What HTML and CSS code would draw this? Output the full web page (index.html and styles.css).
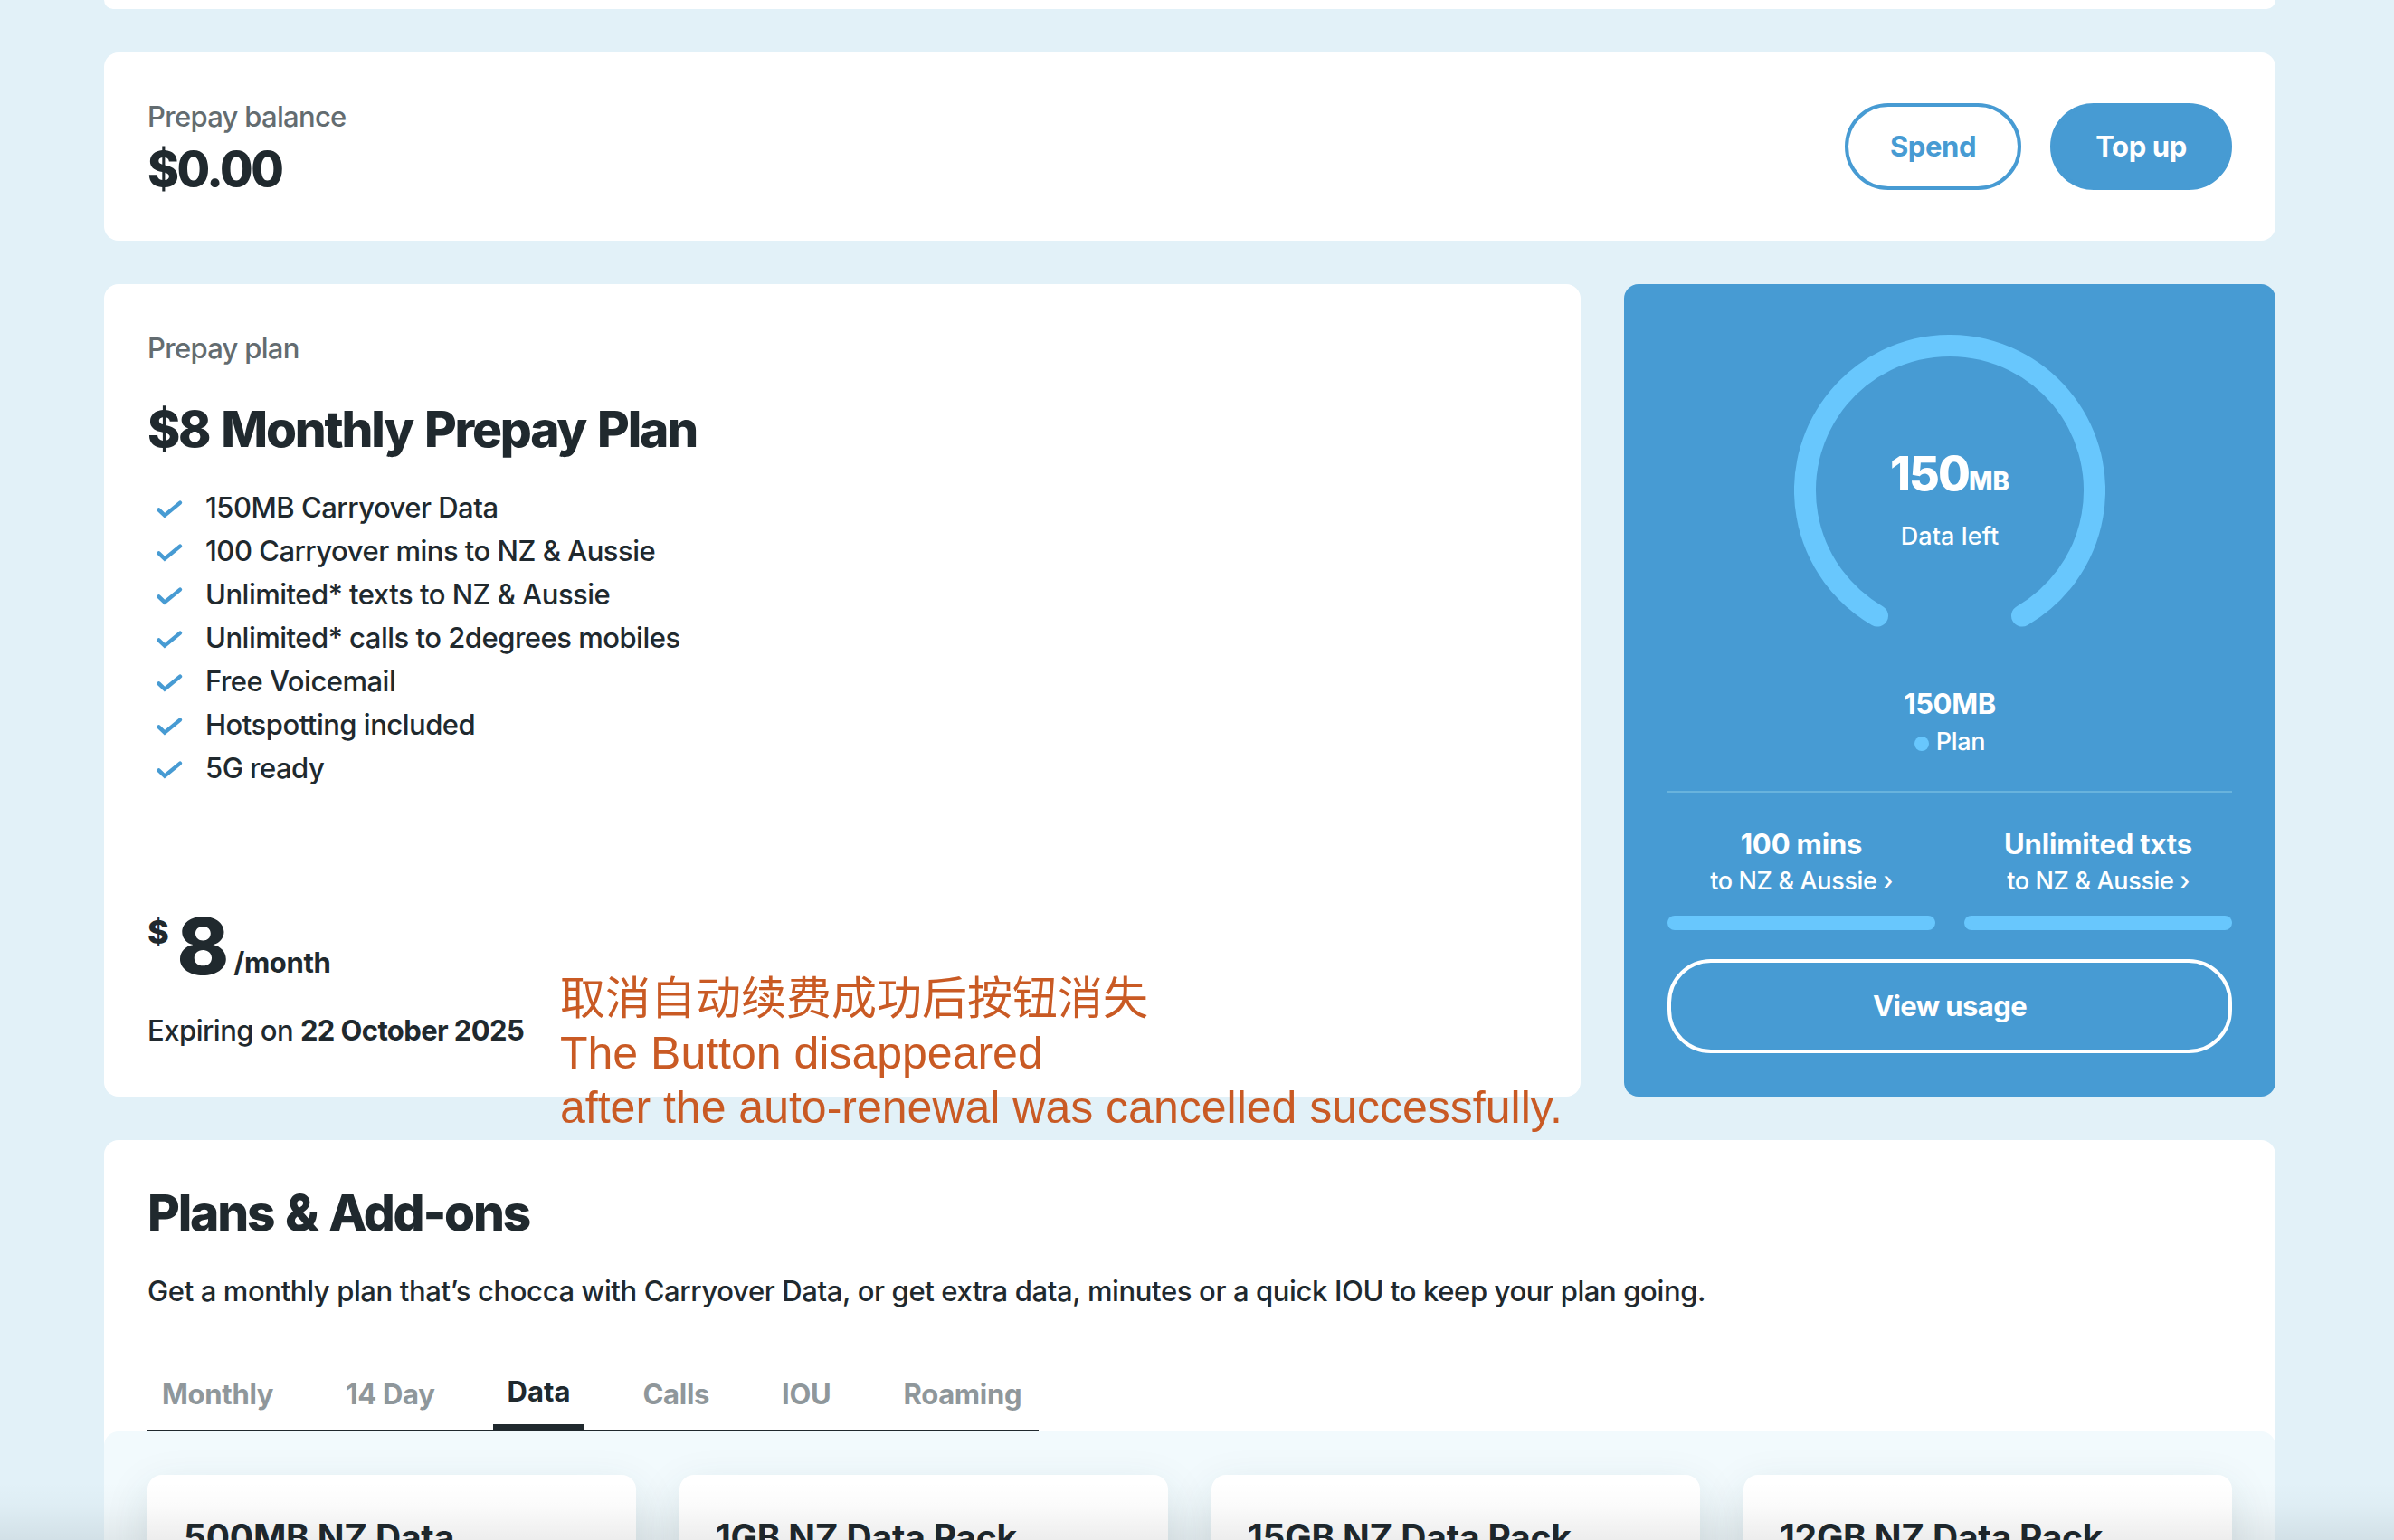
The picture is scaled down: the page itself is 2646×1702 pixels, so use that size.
FILE: index.html
```html
<!DOCTYPE html>
<html lang="en">
<head>
    <meta charset="UTF-8">
    <meta name="viewport" content="width=device-width, initial-scale=1.0">
    <title>Prepay</title>
    <link rel="stylesheet" href="styles.css">
</head>
<body>
    <svg class="symbols" aria-hidden="true">
        <symbol id="check" viewBox="0 0 32 23">
            <path d="M4.5 13.4 L11 19.6 L28 5.6" fill="none" stroke="currentColor" stroke-width="4.4" stroke-linecap="round"/>
        </symbol>
    </svg>

    <main class="page">
        <section class="card card-previous"></section>

        <section class="card balance">
            <div>
                <div class="label">Prepay balance</div>
                <div class="balance-value">$0.00</div>
            </div>
            <div class="balance-actions">
                <button class="btn btn-outline btn-spend">Spend</button>
                <button class="btn btn-solid btn-topup">Top up</button>
            </div>
        </section>

        <div class="plan-row">
            <section class="card plan">
                <div class="label">Prepay plan</div>
                <h2 class="plan-title">$8 Monthly Prepay Plan</h2>
                <ul class="features">
                    <li><svg><use href="#check"/></svg>150MB Carryover Data</li>
                    <li><svg><use href="#check"/></svg>100 Carryover mins to NZ &amp; Aussie</li>
                    <li><svg><use href="#check"/></svg>Unlimited* texts to NZ &amp; Aussie</li>
                    <li><svg><use href="#check"/></svg>Unlimited* calls to 2degrees mobiles</li>
                    <li><svg><use href="#check"/></svg>Free Voicemail</li>
                    <li><svg><use href="#check"/></svg>Hotspotting included</li>
                    <li><svg><use href="#check"/></svg>5G ready</li>
                </ul>
                <div class="price">
                    <span class="price-currency">$</span>
                    <span class="price-amount">8</span>
                    <span class="price-period">/month</span>
                </div>
                <div class="expiry">Expiring on <strong>22 October 2025</strong></div>
            </section>

            <section class="usage">
                <div class="gauge">
                    <svg viewBox="0 0 344 344">
                        <path d="M92 310.56 A160 160 0 1 1 252 310.56" fill="none" stroke="#68c7fd" stroke-width="24" stroke-linecap="round"/>
                    </svg>
                    <div class="gauge-text">
                        <div class="gauge-value">150<span>MB</span></div>
                        <div class="gauge-label">Data left</div>
                    </div>
                </div>
                <div class="usage-total">150MB</div>
                <div class="usage-legend"><i class="dot"></i>Plan</div>
                <div class="allowances">
                    <div class="allowance">
                        <strong>100 mins</strong>
                        <span>to NZ &amp; Aussie ›</span>
                        <div class="bar"></div>
                    </div>
                    <div class="allowance">
                        <strong>Unlimited txts</strong>
                        <span>to NZ &amp; Aussie ›</span>
                        <div class="bar"></div>
                    </div>
                </div>
                <button class="btn btn-usage">View usage</button>
            </section>
        </div>

        <section class="card addons">
            <div class="addons-head">
                <h2 class="addons-title">Plans &amp; Add-ons</h2>
                <p>Get a monthly plan that’s chocca with Carryover Data, or get extra data, minutes or a quick IOU to keep your plan going.</p>
                <ul class="tabs">
                    <li>Monthly</li>
                    <li>14 Day</li>
                    <li class="active">Data</li>
                    <li>Calls</li>
                    <li>IOU</li>
                    <li>Roaming</li>
                </ul>
            </div>
            <div class="packs">
                <div class="pack">500MB NZ Data</div>
                <div class="pack">1GB NZ Data Pack</div>
                <div class="pack">15GB NZ Data Pack</div>
                <div class="pack">12GB NZ Data Pack</div>
            </div>
        </section>
    </main>

    <div class="note">
        取消自动续费成功后按钮消失<br>
        The Button disappeared<br>
        after the auto-renewal was cancelled successfully.
    </div>
    <div class="bottom-shade"></div>
</body>
</html>
```
FILE: styles.css
```css
* {
    box-sizing: border-box;
}
html {
    overflow: hidden;
}
body {
    position: relative;
    height: 1702px;
    margin: 0;
    overflow: hidden;
    background-color: #e2f1f8;
    color: #20292e;
    font-family: Inter, "Noto Sans", sans-serif;
    font-size: 31px;
    line-height: 48px;
    letter-spacing: -0.35px;
}
h2, p, ul {
    margin: 0;
    padding: 0;
}
ul {
    list-style: none;
}
.symbols {
    position: absolute;
    width: 0;
    height: 0;
}
.page {
    display: flex;
    flex-direction: column;
    gap: 48px;
    width: 2400px;
    height: 1702px;
    margin-left: 115px;
}
.card {
    background-color: white;
    border-radius: 16px;
}
.card-previous {
    flex-shrink: 0;
    height: 10px;
    border-radius: 0 0 16px 16px;
}
.label {
    color: #636c70;
    font-weight: 450;
    letter-spacing: -0.7px;
}

/* Balance */
.balance {
    display: flex;
    flex-shrink: 0;
    align-items: center;
    justify-content: space-between;
    height: 208px;
    padding: 2px 48px 0;
}
.balance-value {
    font-size: 53px;
    font-weight: 800;
    line-height: 69px;
    letter-spacing: -2.4px;
}
.balance-actions {
    display: flex;
    gap: 32px;
    margin-top: -2px;
}
.btn {
    height: 96px;
    padding: 0;
    border: 4px solid #479bd3;
    border-radius: 48px;
    font: inherit;
    font-weight: 700;
    letter-spacing: -0.4px;
}
.btn-outline {
    background-color: white;
    color: #479bd3;
}
.btn-solid {
    background-color: #479bd3;
    color: white;
}
.btn-spend {
    width: 195px;
}
.btn-topup {
    width: 201px;
}

/* Plan */
.plan-row {
    display: grid;
    flex-shrink: 0;
    grid-template-columns: 1632px 720px;
    gap: 48px;
    height: 898px;
}
.plan {
    display: flex;
    flex-direction: column;
    padding: 47px 48px 49px;
}
.plan-title, .addons-title {
    font-size: 55px;
    font-weight: 800;
    line-height: 72px;
    letter-spacing: -2.2px;
    word-spacing: 3px;
}
.plan-title {
    margin-top: 29px;
}
.features {
    margin-top: 27px;
    font-weight: 500;
    letter-spacing: -0.5px;
}
.features li {
    display: flex;
    align-items: center;
}
.features svg {
    width: 32px;
    height: 23px;
    margin: 0 24px 0 8px;
    color: #479bd3;
}
.price {
    display: flex;
    align-items: flex-start;
    height: 80px;
    margin-top: auto;
    margin-bottom: 32px;
    font-weight: 700;
}
.price-currency {
    font-size: 36px;
    font-weight: 800;
    line-height: 54px;
}
.price-amount {
    margin-left: 9px;
    font-size: 87px;
    font-weight: 800;
    line-height: 85px;
    letter-spacing: -2px;
}
.price-period {
    align-self: flex-end;
    margin: 0 0 -1px 7px;
    line-height: 40px;
}
.expiry {
    font-weight: 450;
    letter-spacing: -0.5px;
}
.expiry strong {
    font-weight: 700;
    letter-spacing: -0.6px;
}

/* Usage */
.usage {
    padding: 56px 48px 48px;
    border-radius: 16px;
    background-color: #479bd3;
    color: white;
    text-align: center;
    line-height: 40px;
}
.gauge {
    position: relative;
    width: 344px;
    height: 344px;
    margin: 0 auto 44px;
}
.gauge svg {
    display: block;
}
.gauge-text {
    position: absolute;
    top: 122px;
    left: 0;
    width: 100%;
}
.gauge-value {
    height: 64px;
    font-size: 52px;
    font-weight: 800;
    line-height: 64px;
    letter-spacing: -1.9px;
}
.gauge-value span {
    font-size: 28px;
    line-height: 28px;
    letter-spacing: 0;
}
.gauge-label {
    margin-top: 15px;
    font-size: 27px;
    font-weight: 500;
    line-height: 44px;
    letter-spacing: 0.1px;
}
.usage-total, .allowance strong {
    font-weight: 700;
}
.usage-legend {
    display: flex;
    align-items: center;
    justify-content: center;
    gap: 8px;
    margin-top: 2px;
    font-size: 27px;
    font-weight: 500;
}
.dot {
    width: 16px;
    height: 16px;
    margin-top: 3px;
    border-radius: 50%;
    background-color: #68c7fd;
}
.allowances {
    display: grid;
    grid-template-columns: 1fr 1fr;
    gap: 32px;
    margin-top: 34px;
    padding-top: 37px;
    border-top: 2px solid #68b3dd;
}
.allowance strong, .allowance span {
    display: block;
}
.allowance strong {
    letter-spacing: -0.15px;
}
.allowance span {
    margin-top: 1px;
    font-size: 27px;
    font-weight: 500;
}
.bar {
    height: 16px;
    margin-top: 18px;
    border-radius: 8px;
    background-color: #68c7fd;
}
.btn-usage {
    display: block;
    width: 100%;
    height: 104px;
    margin-top: 32px;
    border-color: white;
    background: none;
    color: white;
    letter-spacing: -0.6px;
}

/* Plans & Add-ons */
.addons {
    flex: 1;
    min-height: 0;
    border-radius: 16px 16px 0 0;
    overflow: hidden;
}
.addons-head {
    padding: 44px 48px 0;
}
.addons-head p {
    margin-top: 27px;
    font-weight: 500;
    letter-spacing: -0.37px;
}
.tabs {
    display: flex;
    gap: 48px;
    width: 985px;
    margin-top: 49px;
    border-bottom: 2px solid #20292e;
    color: #8f979b;
    font-weight: 700;
    letter-spacing: -0.3px;
    white-space: nowrap;
}
.tabs li {
    height: 80px;
    padding: 0 16px;
    line-height: 82px;
}
.tabs .active {
    border-bottom: 6px solid #20292e;
    color: #20292e;
    line-height: 76px;
    letter-spacing: 0;
}
.packs {
    display: grid;
    grid-template-columns: repeat(4, 540px);
    gap: 48px;
    height: 120px;
    padding: 48px 48px 0;
    border-radius: 16px 16px 0 0;
    background-color: #f2fafd;
}
.pack {
    padding: 45px 40px 0;
    border-radius: 16px 16px 0 0;
    background-color: white;
    box-shadow: 0 16px 48px rgba(32, 70, 80, 0.13);
    font-size: 39px;
    font-weight: 700;
    line-height: 48px;
    letter-spacing: -0.2px;
}

/* Annotation over the page */
.note {
    position: absolute;
    top: 1074px;
    left: 619px;
    color: #c95a24;
    font-family: "Liberation Sans", "Noto Sans CJK SC", sans-serif;
    font-size: 50px;
    line-height: 60px;
    letter-spacing: 0;
    white-space: nowrap;
}
.bottom-shade {
    position: absolute;
    right: 0;
    bottom: 0;
    left: 0;
    height: 64px;
    background: linear-gradient(rgba(0, 0, 0, 0), rgba(0, 0, 0, 0.015) 40%, rgba(0, 0, 0, 0.07));
}
```
